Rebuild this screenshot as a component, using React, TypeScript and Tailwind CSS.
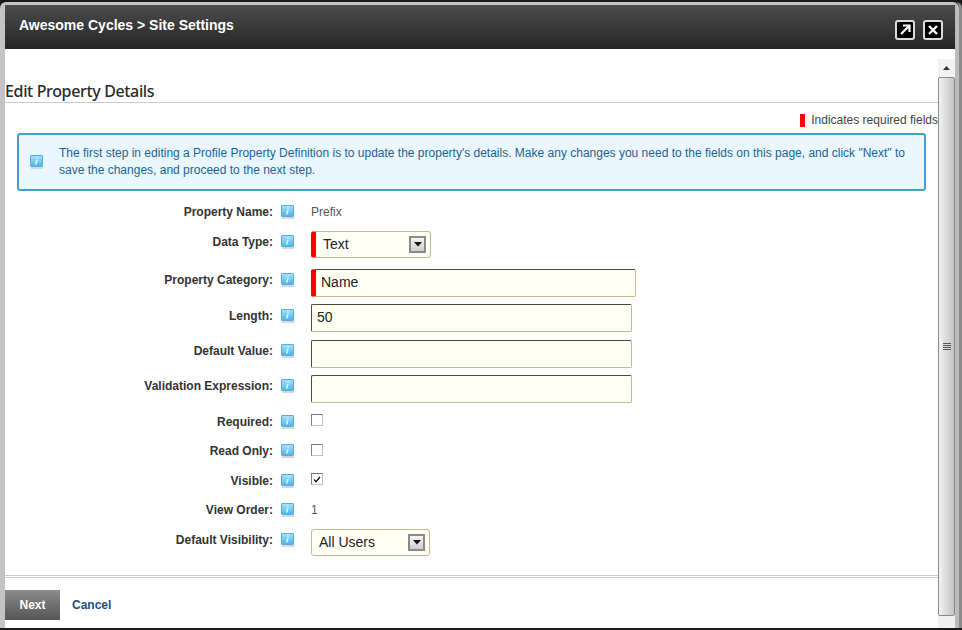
import React from "react";

function InfoIcon() {
  return (
    <span className="flex h-[14px] w-[14px] shrink-0 flex-col">
      <span className="flex h-[12px] w-[13px] items-center justify-center rounded-[1px] border border-[#55ade2] bg-gradient-to-b from-[#a4e0fa] to-[#4fb4ec]">
        <svg width="5" height="8" viewBox="0 0 5 8">
          <path d="M2.4 0.5h1.6l-.3 1.3h-1.6zM2 3h1.6l-1 4.5h-1.6z" fill="#eaf7ff" />
        </svg>
      </span>
      <span className="ml-[1px] h-[2px] w-[12px] bg-[#d5d9dc]" />
    </span>
  );
}

function Row({ label, h, mt, children }: { label: string; h: string; mt: string; children: React.ReactNode }) {
  return (
    <div className={`flex ${h}`}>
      <div className={`flex h-4 ${mt} items-center`}>
        <span className="w-[268px] text-right text-xs font-bold text-[#333]">{label}</span>
        <span className="ml-2">
          <InfoIcon />
        </span>
      </div>
      <div className="ml-[16px]">{children}</div>
    </div>
  );
}

function ArrowBox() {
  return (
    <span className="flex h-[17px] w-[17px] items-center justify-center border-2 border-[#8a8a8a] bg-gradient-to-b from-[#f4f4f4] to-[#cfcfcf]">
      <svg width="8" height="5" viewBox="0 0 8 5">
        <path d="M0 0h8l-4 4.5z" fill="#111" />
      </svg>
    </span>
  );
}

function Select({ value, required, w }: { value: string; required?: boolean; w: string }) {
  return (
    <div
      className={`flex h-[27px] ${w} items-center justify-between rounded-[3px] border border-[#c4b98e] bg-[#fffff5] pr-[4px] text-sm leading-[24px] text-[#222] ${
        required ? "border-l-[5px] border-l-[#f00] pl-[7px]" : "pl-[7px]"
      }`}
    >
      <span className="-mt-[1px]">{value}</span>
      <ArrowBox />
    </div>
  );
}

function TextInput({ value, required }: { value?: string; required?: boolean }) {
  return (
    <div
      className={`flex h-[28px] items-center rounded-[2px] border border-[#c4b98e] border-t-[#4d4a3c] border-l-[#4d4a3c] bg-[#fffef3] pb-[2px] text-sm text-[#222] ${
        required ? "w-[325px] border-l-[5px] border-l-[#f00] pl-[5px]" : "w-[321px] pl-[5px]"
      }`}
    >
      {value}
    </div>
  );
}

function CheckBox({ checked, mt }: { checked?: boolean; mt: string }) {
  return (
    <div
      className={`flex h-[12px] w-[12px] ${mt} items-center justify-center border border-[#b9c0cc] border-t-[#777] border-l-[#8a8078] bg-white`}
    >
      {checked && (
        <svg width="8" height="7" viewBox="0 0 8 7">
          <path d="M1 3.5l2 2.2L7 1" fill="none" stroke="#111" strokeWidth="1.3" />
        </svg>
      )}
    </div>
  );
}

export default function App() {
  return (
    <div className="flex h-[630px] w-[962px] flex-col overflow-hidden bg-[#1a1a1a] pt-[2px] pb-[2px] font-['Liberation_Sans',Arial,sans-serif]">
      <div className="flex min-h-0 flex-1 flex-col rounded-t-[6px] border-r-[3px] border-[#8c8c8c]">
        <div className="flex min-h-0 flex-1 flex-col rounded-t-[6px] border-t-[3px] border-r-[4px] border-l-[5px] border-[#c4c4c4] border-r-[#bcbcbc]">
          {/* Barra de titulo */}
          <div className="flex h-[44px] shrink-0 items-start justify-between bg-gradient-to-b from-[#4c4c4c] to-[#262626] pt-[10px] pr-[12px] pl-[14px]">
            <span className="text-sm font-bold text-white">Awesome Cycles &gt; Site Settings</span>
            <div className="mt-[5px] flex gap-2">
              <span className="flex h-[20px] w-[20px] items-center justify-center rounded-[3px] border-2 border-[#ddd] bg-black">
                <svg width="12" height="12" viewBox="0 0 12 12">
                  <path d="M2 10L9.5 2.5M4 1.5h6.5V8" fill="none" stroke="#fff" strokeWidth="2.2" />
                </svg>
              </span>
              <span className="flex h-[20px] w-[20px] items-center justify-center rounded-[3px] border-2 border-[#ddd] bg-black">
                <svg width="12" height="12" viewBox="0 0 12 12">
                  <path d="M2 2l8 8M10 2l-8 8" fill="none" stroke="#fff" strokeWidth="2.4" />
                </svg>
              </span>
            </div>
          </div>

          <div className="flex min-h-0 flex-1 bg-white">
            <div className="flex w-[933px] flex-col">
              <div className="mt-[31px] flex h-[23px] items-center border-b border-[#ccc]">
                <h2 className="font-['Noto_Sans',sans-serif] text-base leading-[22px] font-medium tracking-[-0.35px] text-[#2b2b2b]">
                  Edit Property Details
                </h2>
              </div>
              <div className="mt-[9px] flex h-4 items-center justify-end text-xs text-[#444]">
                <span className="mr-[6px] h-[13px] w-[5px] bg-[#f00]" />
                Indicates required fields
              </div>
              <div className="mt-[5px] ml-[12px] flex h-[58px] w-[909px] items-center rounded-[3px] border-2 border-[#45a0d2] bg-[#ebf7fe] pl-[11px]">
                <InfoIcon />
                <p className="ml-[15px] w-[855px] text-xs leading-[17px] text-[#1a6496]">
                  The first step in editing a Profile Property Definition is to update the property's details. Make any
                  changes you need to the fields on this page, and click "Next" to save the changes, and proceed to the
                  next step.
                </p>
              </div>

              <div className="mt-[12px]">
                <Row label="Property Name:" h="h-[28px]" mt="mt-[1px]">
                  <div className="mt-[1px] h-4 text-xs leading-4 text-[#555]">Prefix</div>
                </Row>
                <Row label="Data Type:" h="h-[38px]" mt="mt-[3px]">
                  <Select value="Text" required w="w-[120px]" />
                </Row>
                <Row label="Property Category:" h="h-[35px]" mt="mt-[3px]">
                  <TextInput value="Name" required />
                </Row>
                <Row label="Length:" h="h-[36px]" mt="mt-[4px]">
                  <TextInput value="50" />
                </Row>
                <Row label="Default Value:" h="h-[35px]" mt="mt-[3px]">
                  <TextInput />
                </Row>
                <Row label="Validation Expression:" h="h-[38px]" mt="mt-[3px]">
                  <TextInput />
                </Row>
                <Row label="Required:" h="h-[29px]" mt="mt-[1px]">
                  <CheckBox mt="mt-[1px]" />
                </Row>
                <Row label="Read Only:" h="h-[30px]" mt="mt-[1px]">
                  <CheckBox mt="mt-[2px]" />
                </Row>
                <Row label="Visible:" h="h-[29px]" mt="mt-[1px]">
                  <CheckBox checked mt="mt-[1px]" />
                </Row>
                <Row label="View Order:" h="h-[28px]" mt="mt-[1px]">
                  <div className="mt-[1px] h-4 text-xs leading-4 text-[#555]">1</div>
                </Row>
                <Row label="Default Visibility:" h="h-[46px]" mt="mt-[3px]">
                  <Select value="All Users" w="w-[119px]" />
                </Row>
              </div>

              <div className="h-[3px] border-y border-[#ccc]" />
              <div className="mt-[12px] flex items-center">
                <span className="flex h-[30px] w-[55px] items-center justify-center bg-gradient-to-b from-[#8c8c8c] to-[#565656] text-xs font-bold text-white">
                  Next
                </span>
                <span className="ml-3 text-xs font-bold text-[#1b4f7c]">Cancel</span>
              </div>
            </div>

            {/* Scrollbar */}
            <div className="mt-[10px] flex w-[17px] flex-col bg-[#f0f0f0]">
              <div className="flex h-[18px] items-center justify-center bg-[#f2f2f2]">
                <svg width="7" height="4" viewBox="0 0 7 4">
                  <path d="M3.5 0L7 4H0z" fill="#333" />
                </svg>
              </div>
              <div className="flex h-[539px] items-center justify-center rounded-[2px] border border-[#8a8a8a] bg-gradient-to-r from-[#f2f2f2] to-[#c4c4c4]">
                <div className="flex w-[8px] flex-col gap-[1px]">
                  <span className="h-[1px] bg-[#555]" />
                  <span className="h-[1px] bg-[#555]" />
                  <span className="h-[1px] bg-[#555]" />
                  <span className="h-[1px] bg-[#555]" />
                </div>
              </div>
            </div>
          </div>
        </div>
      </div>
    </div>
  );
}
